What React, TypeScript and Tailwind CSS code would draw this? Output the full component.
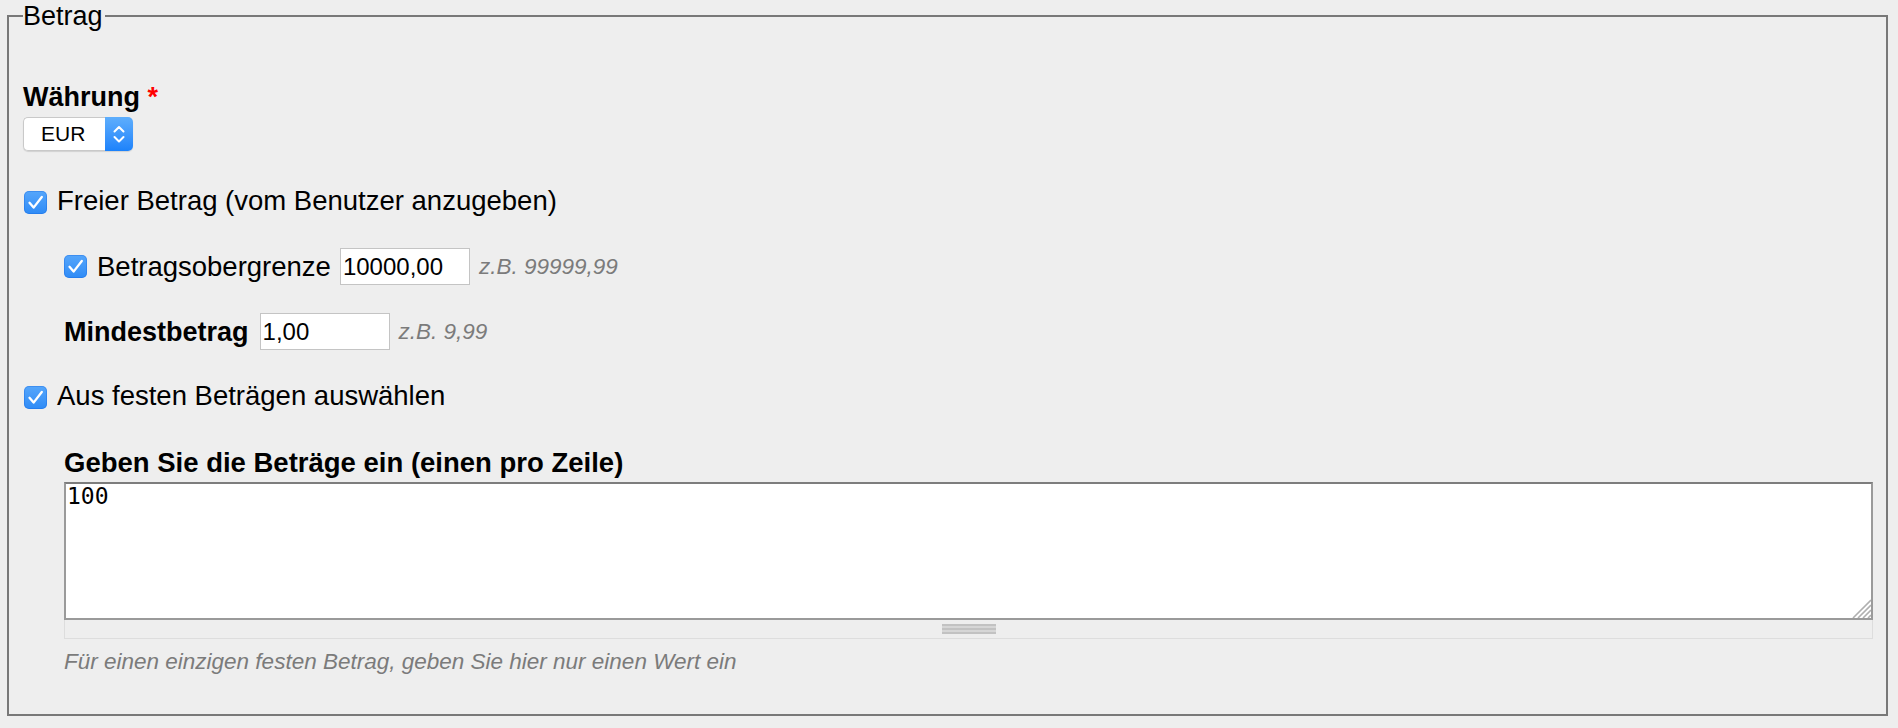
function CheckBox() {
    return (
        <span className="flex h-[23px] w-[23px] shrink-0 items-center justify-center rounded-[5px] bg-linear-to-b from-[#55a6fb] to-[#2e8bf6] shadow-[inset_0_0_0_1px_rgba(20,100,220,0.35)]">
            <svg width="23" height="23" viewBox="0 0 23 23" fill="none">
                <path d="M5.5 11.8 L9.6 16.6 L17.8 6" stroke="white" strokeWidth="2.3" strokeLinecap="round" strokeLinejoin="round" />
            </svg>
        </span>
    )
}

function Hint({children}: {children: React.ReactNode}) {
    return <span className="ml-[9px] text-[22.5px] italic leading-[26px] text-[#7b7b7b]">{children}</span>
}

function TextInput({value, width}: {value: string, width: string}) {
    return (
        <input
            type="text"
            defaultValue={value}
            className={`${width} h-[37px] shrink-0 border border-[#c4c4c4] bg-white pl-[2px] text-[24px] text-black outline-none`}
        />
    )
}

export default function App() {
    return (
        <div className="min-h-screen bg-[#eeeeee] pt-0 font-['Liberation_Sans',Arial,sans-serif] text-[27.5px] leading-[32px] text-black">
            <fieldset className="ml-[7px] mr-[10px] border-2 border-solid border-[#787878] pl-[12px] pr-[13px] pb-[39px]">
                <legend className="ml-[2px] pr-[2px] text-[27px] leading-[32px]">Betrag</legend>

                {/* Currency */}
                <div className="ml-[2px] mt-[49px] text-[27px] font-bold">
                    Währung <span className="text-[#ff0000]">*</span>
                </div>
                <div className="ml-[2px] mt-[4px] flex h-[34px] w-[110px] rounded-[5px] shadow-[0_1px_1px_rgba(0,0,0,0.12)]">
                    <div className="flex flex-1 items-center rounded-l-[5px] border border-r-0 border-[#c9c9c9] bg-white pl-[17px] text-[21px]">EUR</div>
                    <div className="flex w-[28px] items-center justify-center rounded-r-[5px] bg-linear-to-b from-[#5eaefc] to-[#1b82fb]">
                        <svg width="28" height="34" viewBox="0 0 28 34" fill="none">
                            <path d="M9.5 14.5 L14 10 L18.5 14.5" stroke="white" strokeWidth="2" strokeLinecap="round" strokeLinejoin="round" />
                            <path d="M9.5 20 L14 24.5 L18.5 20" stroke="white" strokeWidth="2" strokeLinecap="round" strokeLinejoin="round" />
                        </svg>
                    </div>
                </div>

                {/* Free amount */}
                <div className="mt-[34px] flex items-start">
                    <span className="ml-[3px] mt-[6px]"><CheckBox /></span>
                    <span className="ml-[10px]">Freier Betrag (vom Benutzer anzugeben)</span>
                </div>

                <div className="mt-[31px] flex items-center pl-[43px]">
                    <CheckBox />
                    <span className="ml-[10px]">Betragsobergrenze</span>
                    <span className="ml-[9px]"><TextInput value="10000,00" width="w-[130px]" /></span>
                    <Hint>z.B. 99999,99</Hint>
                </div>

                <div className="mt-[28px] flex items-center pl-[43px]">
                    <span className="text-[27px] font-bold">Mindestbetrag</span>
                    <span className="ml-[11px]"><TextInput value="1,00" width="w-[130px]" /></span>
                    <Hint>z.B. 9,99</Hint>
                </div>

                {/* Fixed amounts */}
                <div className="mt-[30px] flex items-start">
                    <span className="ml-[3px] mt-[6px]"><CheckBox /></span>
                    <span className="ml-[10px]">Aus festen Beträgen auswählen</span>
                </div>

                <div className="ml-[43px]">
                    <div className="mt-[35px] font-bold">Geben Sie die Beträge ein (einen pro Zeile)</div>
                    <div className="relative mt-[3px]">
                        <textarea
                            defaultValue="100"
                            className="block h-[138px] w-full resize-none border-2 border-[#9a9a9a] border-t-[#7d7d7d] bg-white pl-[1px] pt-0 font-['DejaVu_Sans_Mono',monospace] text-[23px] leading-[24px] text-black outline-none"
                        />
                        <svg className="absolute bottom-[2px] right-[2px]" width="20" height="20" viewBox="0 0 20 20" fill="none">
                            <path d="M20 2 L2 20 M20 7 L7 20 M20 12 L12 20 M20 17 L17 20" stroke="#b0b0b0" strokeWidth="1.6" />
                        </svg>
                    </div>
                    <div className="flex h-[19px] items-center justify-center border border-t-0 border-[#dddddd] bg-[#eeeeee]">
                        <div className="flex w-[54px] flex-col">
                            <div className="h-[2px] bg-[#c2c2c2]" />
                            <div className="h-[2px] bg-[#d6d6d6]" />
                            <div className="h-[2px] bg-[#c2c2c2]" />
                            <div className="h-[2px] bg-[#d6d6d6]" />
                            <div className="h-[2px] bg-[#c2c2c2]" />
                        </div>
                    </div>
                    <div className="mt-[10px] text-[22.5px] italic leading-[26px] text-[#7b7b7b]">
                        Für einen einzigen festen Betrag, geben Sie hier nur einen Wert ein
                    </div>
                </div>
            </fieldset>
        </div>
    )
}
